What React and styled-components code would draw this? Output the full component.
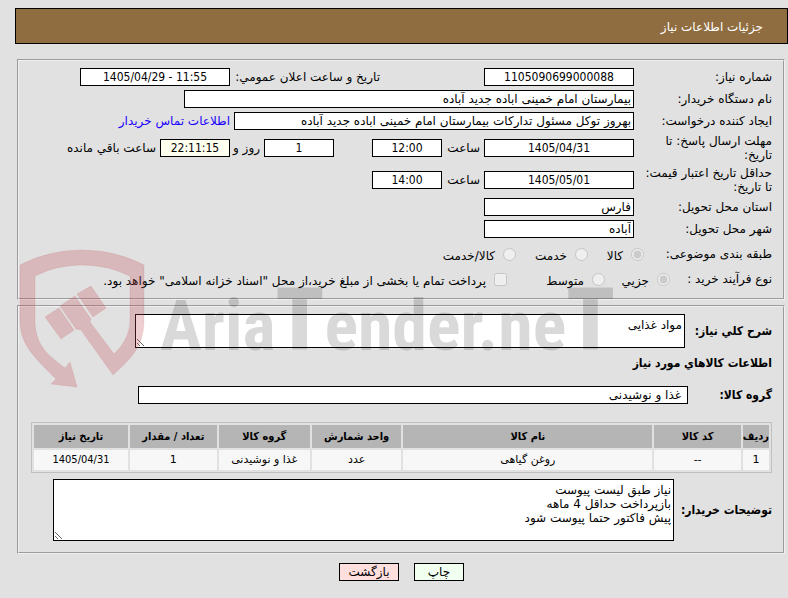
import React from "react";
import styled, { createGlobalStyle } from "styled-components";

const GlobalStyle = createGlobalStyle`
  * { box-sizing: border-box; }
  body {
    margin: 0;
    background: #e1e1e1;
    color: #000;
    font: 12px/14px "DejaVu Sans", sans-serif;
  }
  input, textarea, button { font: inherit; color: inherit; }
`;

const condensed = `"DejaVu Sans Condensed", "DejaVu Sans", sans-serif`;

const Page = styled.div`
  position: relative;
  padding: 8px 0 18px;
`;

const TitleBar = styled.h1`
  display: flex;
  align-items: center;
  height: 36px;
  margin: 0 0 15px 15px;
  padding: 2px 24px 0;
  border: 1px solid #000;
  background: #8f6d40;
  color: #fff;
  font-size: 12px;
  font-weight: normal;
`;

const Panel = styled.section`
  margin: 0 3px 5px 17px;
  padding: ${(p) => p.$pad};
  border: 2px groove #f0f0f0;
`;

const Row = styled.div`
  display: flex;
  align-items: center;
  gap: 4px;
  min-height: ${(p) => p.$height || 22}px;
  white-space: nowrap;
`;

const Label = styled.label`
  flex: none;
  width: ${(p) => p.$width || 134}px;
  white-space: normal;
  ${(p) => p.$bold && `font-weight: bold; font-family: ${condensed};`}
`;

const InlineLabel = styled.label`
  flex: none;
  width: ${(p) => p.$width}px;
  margin-inline-start: ${(p) => p.$start || 0}px;
`;

const Field = styled.input`
  flex: 0 1 ${(p) => p.$width}px;
  min-width: 0;
  height: 18px;
  margin: 0;
  margin-inline-start: ${(p) => p.$start || 0}px;
  padding: 0 ${(p) => p.$pad || 2}px;
  border: 1px solid #000;
  background: ${(p) => (p.$warm ? "#fffff0" : "#fff")};
  text-align: ${(p) => (p.$center ? "center" : "start")};
  ${(p) => p.$center && `font-family: ${condensed};`}
`;

const ContactLink = styled.a`
  color: #1a00ff;
  text-decoration: none;
`;

const Choice = styled.label`
  display: flex;
  align-items: center;
  gap: 8px;
  width: ${(p) => p.$width}px;
  input { flex: none; width: 13px; height: 13px; margin: 0; }
  span { padding-top: 4px; }
`;

const Area = styled.textarea`
  flex: 0 1 ${(p) => p.$width}px;
  min-width: 0;
  height: ${(p) => p.$height}px;
  margin: 0;
  padding: 3px 2px;
  border: 1px solid #000;
  background: #fff;
  resize: both;
  overflow: auto;
`;

const Heading = styled.h2`
  margin: 8px 0 14px;
  font: bold 12px/14px ${condensed};
`;

const ItemTable = styled.table`
  width: calc(100% - 1px);
  margin: 16px 0 6px;
  border: 1px solid #c0c0c0;
  border-spacing: 2px;
  table-layout: fixed;
  font-size: 11px;
  text-align: center;
  white-space: nowrap;
  th { height: 23px; padding: 0; background: #b5b5b5; font-family: ${condensed}; }
  td { height: 20px; padding: 0; background: #f7f7f7; }
  td:last-child { font-family: ${condensed}; }
`;

const Col = styled.col`
  width: ${(p) => p.$width};
`;

const Actions = styled.div`
  display: flex;
  justify-content: center;
  gap: 15px;
  margin-top: 9px;
  padding-left: 15px;
`;

const Action = styled.button`
  width: ${(p) => p.$width}px;
  height: 18px;
  padding: 0;
  border: 1px solid #000;
  background: ${(p) => p.$tone};
`;

const Watermark = styled.div`
  position: absolute;
  top: 248px;
  left: 19px;
  display: flex;
  direction: ltr;
  pointer-events: none;
  gap: 13px;
`;

const WatermarkText = styled.span`
  padding-top: 38px;
  color: rgba(0, 0, 0, 0.15);
  font: bold 70px/80px "Liberation Sans Narrow", "Roboto Condensed", "DejaVu Sans Condensed", sans-serif;
  white-space: nowrap;
  b { font-size: 88px; line-height: 0; }
`;

const columns = [
  ["ردیف", "1", "26px"],
  ["کد کالا", "--", "12%"],
  ["نام کالا", "روغن گیاهی", "auto"],
  ["واحد شمارش", "عدد", "12.4%"],
  ["گروه کالا", "غذا و نوشیدنی", "12.6%"],
  ["تعداد / مقدار", "1", "12%"],
  ["تاریخ نیاز", "1405/04/31", "13%"],
];

function Logo() {
  return (
    <svg width="128" height="142" viewBox="0 0 128 142" fill="rgba(192,74,80,0.27)" stroke="rgba(192,74,80,0.12)" aria-hidden="true">
      <path d="M1 17Q30 2 63 2T125 17V72C125 100 110 112 94 127L62 82L57 81L41 58L56 48L72 71L71 74L95 106Q111 91 111 72V28Q88 17 63 17T16 28V72C16 98 30 108 46 120L51 114L58 139L32 136L37 131C14 108 1 96 1 72Z" />
      <path d="M58 46L72 38L87 60L74 69Z" />
      <path d="M26 69L40 60L55 82L42 91Z" />
    </svg>
  );
}

export default function App() {
  return (
    <Page dir="rtl" lang="fa">
      <GlobalStyle />
      <TitleBar>جزئیات اطلاعات نیاز</TitleBar>
      <Panel $pad="5px 11px 8px">
        <Row>
          <Label htmlFor="number">شماره نیاز:</Label>
          <Field id="number" $width={150} $center readOnly defaultValue="1105090699000088" />
          <InlineLabel htmlFor="announce" $width={146} $start={100}>تاریخ و ساعت اعلان عمومي:</InlineLabel>
          <Field id="announce" $width={150} $center readOnly dir="ltr" defaultValue="1405/04/29 - 11:55" />
        </Row>
        <Row>
          <Label htmlFor="buyer">نام دستگاه خریدار:</Label>
          <Field id="buyer" $width={450} readOnly defaultValue="بیمارستان امام خمینی اباده جدید آباده" />
        </Row>
        <Row>
          <Label htmlFor="creator">ایجاد کننده درخواست:</Label>
          <Field id="creator" $width={400} readOnly defaultValue="بهروز توکل مسئول تدارکات بیمارستان امام خمینی اباده جدید آباده" />
          <ContactLink href="#contact">اطلاعات تماس خریدار</ContactLink>
        </Row>
        <Row $height={32}>
          <Label htmlFor="deadline">مهلت ارسال پاسخ: تا<br />تاریخ:</Label>
          <Field id="deadline" $width={150} $center readOnly defaultValue="1405/04/31" />
          <InlineLabel htmlFor="deadlineHour" $width={34}>ساعت</InlineLabel>
          <Field id="deadlineHour" $width={70} $center readOnly defaultValue="12:00" />
          <Field aria-label="روز" $width={70} $center $start={34} readOnly defaultValue="1" />
          <InlineLabel htmlFor="left" $width={26}>روز و</InlineLabel>
          <Field id="left" $width={70} $center $warm readOnly defaultValue="22:11:15" />
          <span>ساعت باقي مانده</span>
        </Row>
        <Row $height={32}>
          <Label htmlFor="validity">حداقل تاریخ اعتبار قیمت:<br />تا تاریخ:</Label>
          <Field id="validity" $width={150} $center readOnly defaultValue="1405/05/01" />
          <InlineLabel htmlFor="validityHour" $width={34}>ساعت</InlineLabel>
          <Field id="validityHour" $width={70} $center readOnly defaultValue="14:00" />
        </Row>
        <Row>
          <Label htmlFor="province">استان محل تحویل:</Label>
          <Field id="province" $width={150} readOnly defaultValue="فارس" />
        </Row>
        <Row>
          <Label htmlFor="city">شهر محل تحویل:</Label>
          <Field id="city" $width={150} readOnly defaultValue="آباده" />
        </Row>
        <Row $height={28} role="radiogroup" aria-label="طبقه بندی موضوعی">
          <Label as="span" $width={124}>طبقه بندی موضوعی:</Label>
          <Choice $width={52}><input type="radio" name="subject" disabled defaultChecked /><span>کالا</span></Choice>
          <Choice $width={68}><input type="radio" name="subject" disabled /><span>خدمت</span></Choice>
          <Choice $width={80}><input type="radio" name="subject" disabled /><span>کالا/خدمت</span></Choice>
        </Row>
        <Row role="radiogroup" aria-label="نوع فرآیند خرید">
          <Label as="span" $width={98}>نوع فرآیند خرید :</Label>
          <Choice $width={61}><input type="radio" name="process" disabled defaultChecked /><span>جزیي</span></Choice>
          <Choice $width={94}><input type="radio" name="process" disabled /><span>متوسط</span></Choice>
          <Choice><input type="checkbox" disabled /><span>پرداخت تمام یا بخشی از مبلغ خرید،از محل "اسناد خزانه اسلامی" خواهد بود.</span></Choice>
        </Row>
      </Panel>

      <Panel $pad="7px 11px 11px">
        <Row>
          <Label htmlFor="summary" $width={83} $bold>شرح کلي نیاز:</Label>
          <Area id="summary" $width={550} $height={34} readOnly defaultValue="مواد غذایی" />
        </Row>
        <Heading>اطلاعات کالاهاي مورد نیاز</Heading>
        <Row>
          <Label htmlFor="group" $width={80} $bold>گروه کالا:</Label>
          <Field id="group" $width={550} $pad={6} readOnly defaultValue="غذا و نوشیدنی" />
        </Row>
        <ItemTable>
          <colgroup>{columns.map(([title, , width]) => <Col key={title} $width={width} />)}</colgroup>
          <thead>
            <tr>{columns.map(([title]) => <th key={title} scope="col">{title}</th>)}</tr>
          </thead>
          <tbody>
            <tr>{columns.map(([title, value]) => <td key={title}>{value}</td>)}</tr>
          </tbody>
        </ItemTable>
        <Row>
          <Label htmlFor="notes" $width={94} $bold>توضیحات خریدار:</Label>
          <Area id="notes" $width={621} $height={62} readOnly defaultValue={"نیاز طبق لیست پیوست\nبازپرداخت حداقل 4 ماهه\nپیش فاکتور حتما پیوست شود"} />
        </Row>
      </Panel>

      <Actions>
        <Action type="button" $width={50} $tone="#f0fff0">چاپ</Action>
        <Action type="button" $width={60} $tone="#ffdede">بازگشت</Action>
      </Actions>

      <Watermark aria-hidden="true">
        <Logo />
        <WatermarkText>Aria<b>T</b>ender.ne<b>T</b></WatermarkText>
      </Watermark>
    </Page>
  );
}
